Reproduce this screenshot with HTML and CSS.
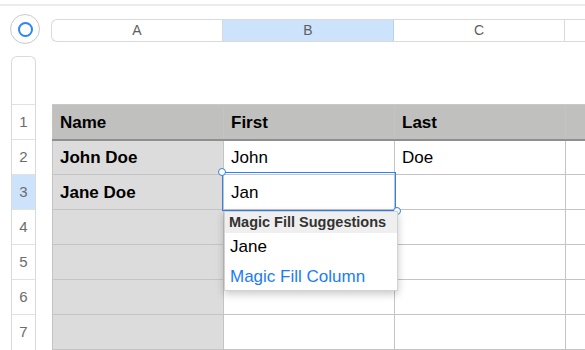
FILE: index.html
```html
<!DOCTYPE html>
<html lang="en">
<head>
    <meta charset="UTF-8">
    <title>Magic Fill</title>
    <link rel="stylesheet" href="styles.css">
</head>
<body>
<div class="topline"></div>
<div class="top">
    <div class="corner"><span class="ring"></span></div>
    <div class="colbar">
        <div class="col">A</div>
        <div class="col col-sel">B</div>
        <div class="col">C</div>
        <div class="col"></div>
    </div>
</div>
<div class="main">
    <div class="rowbar">
        <div class="rn rn-blank"></div>
        <div class="rn">1</div>
        <div class="rn">2</div>
        <div class="rn rn-sel">3</div>
        <div class="rn">4</div>
        <div class="rn">5</div>
        <div class="rn">6</div>
        <div class="rn">7</div>
    </div>
    <div class="sheet">
        <table class="grid">
            <tr class="head">
                <td class="name">Name</td><td>First</td><td>Last</td><td></td>
            </tr>
            <tr>
                <td class="name">John Doe</td><td>John</td><td>Doe</td><td></td>
            </tr>
            <tr>
                <td class="name">Jane Doe</td><td>Jan</td><td></td><td></td>
            </tr>
            <tr><td class="name"></td><td></td><td></td><td></td></tr>
            <tr><td class="name"></td><td></td><td></td><td></td></tr>
            <tr><td class="name"></td><td></td><td></td><td></td></tr>
            <tr><td class="name"></td><td></td><td></td><td></td></tr>
        </table>
        <div class="select">
            <span class="handle handle-tl"></span>
            <span class="handle handle-br"></span>
        </div>
        <div class="popup">
            <div class="popup-title">Magic Fill Suggestions</div>
            <div class="popup-item">Jane</div>
            <div class="popup-item popup-link">Magic Fill Column</div>
        </div>
    </div>
</div>
</body>
</html>
```
FILE: styles.css
```css
html, body {
    margin: 0;
    height: 100%;
    overflow: hidden;
    background: #fff;
    font-family: "Liberation Sans", Arial, sans-serif;
    color: #000;
}
.topline {
    height: 4px;
    border-bottom: 2px solid #ececec;
}
/*顶部：角按钮 + 列标*/
.top {
    display: flex;
    margin-top: 8px;
    padding-left: 10px;
}
.corner {
    width: 28px;
    height: 28px;
    border: 1px solid #c9c9c9;
    border-radius: 50%;
    display: flex;
    align-items: center;
    justify-content: center;
    flex-shrink: 0;
}
.ring {
    width: 11px;
    height: 11px;
    border: 2px solid #2c85f6;
    border-radius: 50%;
}
.colbar {
    display: flex;
    margin: 5px 0 0 11px;
    height: 21px;
    border: 1px solid #dadada;
    border-right: 0;
    border-radius: 6px 0 0 6px;
    overflow: hidden;
    flex-shrink: 0;
}
.col {
    width: 170px;
    border-right: 1px solid #dadada;
    font-size: 14px;
    line-height: 21px;
    text-align: center;
    color: #5f5f5f;
    flex-shrink: 0;
}
.col-sel {
    background: #cce3fb;
    border-right-color: #b8d3ef;
}
/*主体：行号 + 表格*/
.main {
    display: flex;
    margin-top: 12px;
    padding-left: 11px;
}
.rowbar {
    width: 23px;
    border: 1px solid #dadada;
    border-bottom: 0;
    border-radius: 6px 6px 0 0;
    flex-shrink: 0;
}
.rn {
    height: 34px;
    border-top: 1px solid #e2e2e2;
    font-size: 15px;
    line-height: 34px;
    text-align: center;
    color: #6c6c6c;
}
.rn-blank {
    height: 47px;
    border-top: 0;
}
.rn-sel {
    background: #cce3fb;
}
.sheet {
    position: relative;
    margin: 48px 0 0 16px;
}
.grid {
    border-collapse: collapse;
    table-layout: fixed;
    width: 684px;
}
.grid tr {
    height: 35px;
}
.grid td {
    width: 171px;
    box-sizing: border-box;
    padding: 2px 0 0 7px;
    border: 1px solid #c4c4c4;
    font-size: 17px;
    white-space: nowrap;
}
.grid .head td {
    background: #c0c1bf;
    font-weight: bold;
    border-top-color: #c9c9c9;
    border-bottom: 2px solid #8f8f8f;
}
.grid .name {
    background: #dcdcdc;
    font-weight: bold;
}
/*选中单元格*/
.select {
    position: absolute;
    left: 170px;
    top: 68px;
    width: 172px;
    height: 37px;
    border: 1px solid #2f80ef;
}
.handle {
    position: absolute;
    width: 6px;
    height: 6px;
    border: 1.5px solid #2f80ef;
    border-radius: 50%;
    background: #fff;
}
.handle-tl {
    left: -5px;
    top: -5px;
}
.handle-br {
    right: -6px;
    bottom: -5px;
}
/*弹出建议*/
.popup {
    position: absolute;
    left: 172px;
    top: 107px;
    width: 172px;
    height: 78px;
    background: #fff;
    border: 1px solid #d2d2d2;
    box-shadow: 0 3px 8px rgba(0, 0, 0, 0.22);
}
.popup-title {
    height: 21px;
    line-height: 21px;
    padding-left: 4px;
    background: #efefef;
    font-size: 14.5px;
    font-weight: bold;
    color: #333;
}
.popup-item {
    height: 28px;
    line-height: 28px;
    padding-left: 5px;
    font-size: 17px;
}
.popup-link {
    height: 29px;
    line-height: 31px;
    color: #1b7cf4;
}
```
